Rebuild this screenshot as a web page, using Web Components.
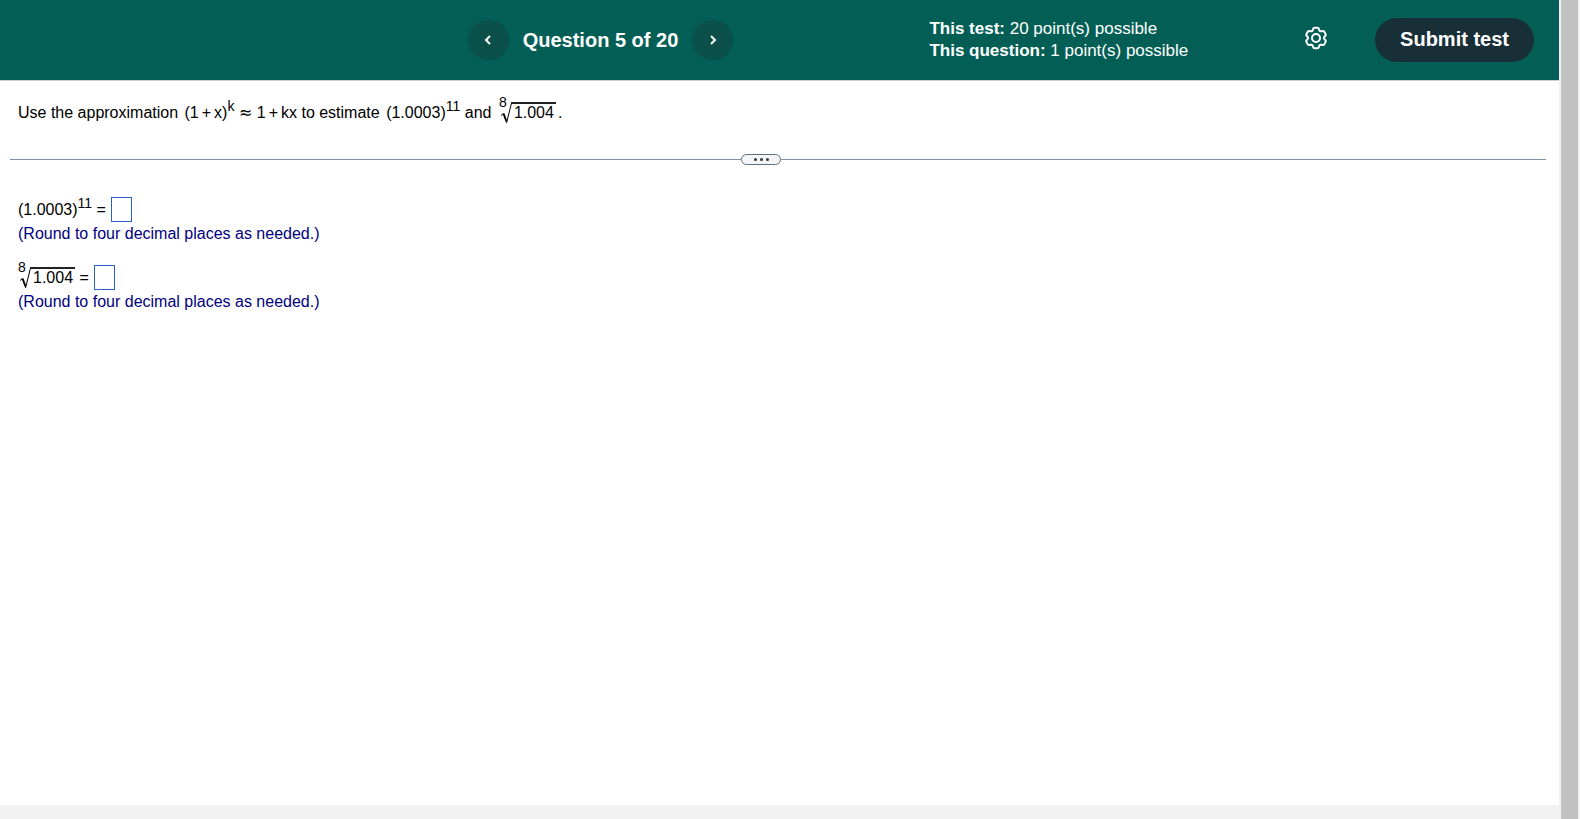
<!DOCTYPE html>
<html lang="en">
<head>
<meta charset="utf-8">
<title>Question 5 of 20</title>
<style>
  body { margin: 0; font: 16px/24px "Liberation Sans", Arial, sans-serif; color: #000; background: #fff; }
</style>
</head>
<body>
<test-page>
  <test-header slot="header">
    <question-nav slot="nav">Question 5 of 20</question-nav>
    <points-info slot="info"></points-info>
    <settings-button slot="actions"></settings-button>
    <submit-button slot="actions">Submit test</submit-button>
  </test-header>
  <question-prompt></question-prompt>
  <split-divider></split-divider>
  <answer-row label="(1.0003) to the 11th power" hint="(Round to four decimal places as needed.)"><math-power exp="11">(1.0003)</math-power></answer-row>
  <answer-row label="8th root of 1.004" hint="(Round to four decimal places as needed.)"><math-root index="8">1.004</math-root></answer-row>
</test-page>

<script>
const define = (name, html, setup) => {
  const template = document.createElement('template');
  template.innerHTML = html;
  customElements.define(name, class extends HTMLElement {
    constructor() {
      super();
      this.attachShadow({ mode: 'open' }).append(template.content.cloneNode(true));
    }
    connectedCallback() { if (setup) setup(this, this.shadowRoot); }
  });
};

define('test-page', `
<style>
  :host { display: flex; min-height: 100vh; }
  .page { flex: 1; min-width: 0; display: flex; flex-direction: column; }
  main { flex: 1; padding-top: 20px; }
  footer { height: 14px; background: #f2f2f2; }
  .track { width: 17px; padding: 0 2px; background: #f1f1f1; display: flex; }
  .thumb { flex: 1; background: #c1c1c1; }
</style>
<div class="page"><slot name="header"></slot><main><slot></slot></main><footer></footer></div>
<div class="track" aria-hidden="true"><div class="thumb"></div></div>`);

define('test-header', `
<style>
  :host { display: block; }
  header { display: grid; grid-template-columns: 30% 1fr calc(40% + 6px); align-items: center; height: 80px; background: #035f56; border-bottom: 1px solid #c8cdd6; color: #fff; }
  .nav { grid-column: 2; }
  .right { display: flex; align-items: center; justify-content: space-between; padding-right: 25px; }
  .actions { display: flex; align-items: center; gap: 48px; }
</style>
<header>
  <div class="nav"><slot name="nav"></slot></div>
  <div class="right"><slot name="info"></slot><div class="actions"><slot name="actions"></slot></div></div>
</header>`);

define('question-nav', `
<style>
  :host { display: flex; align-items: center; gap: 14px; font: bold 20px/24px "Liberation Sans", Arial, sans-serif; white-space: nowrap; }
  button { width: 41px; height: 40px; padding: 0; border: 0; border-radius: 50%; background: #0b4f4b; display: grid; place-items: center; }
  svg { width: 10px; height: 12px; fill: none; stroke: #fff; stroke-width: 2; }
</style>
<button aria-label="Previous question"><svg viewBox="0 0 10 12"><path d="M7 2 3 6l4 4"/></svg></button>
<slot></slot>
<button aria-label="Next question"><svg viewBox="0 0 10 12"><path d="m3 2 4 4-4 4"/></svg></button>`);

define('points-info', `
<style>
  :host { display: block; font-size: 17px; line-height: 22px; white-space: nowrap; }
</style>
<div><b>This test:</b> 20 point(s) possible</div>
<div><b>This question:</b> 1 point(s) possible</div>`);

define('settings-button', `
<style>
  :host { display: block; }
  button { display: block; padding: 0; border: 0; background: none; }
  svg { display: block; width: 22px; height: 26px; overflow: visible; fill: none; stroke: #fff; stroke-width: 2; }
</style>
<button aria-label="Settings"><svg viewBox="-11 -11 22 26"><path class="rim"/><circle r="4"/></svg></button>`,
(host, root) => {
  // Six broad rounded teeth with narrow notches, one tooth pointing straight up.
  const points = [];
  for (let deg = 0; deg < 360; deg += 3) {
    const a = deg * Math.PI / 180;
    const r = 9 + 1.3 * Math.tanh(2 * Math.cos(6 * a) + 1);
    points.push((r * Math.sin(a)).toFixed(2) + ' ' + (-r * Math.cos(a)).toFixed(2));
  }
  root.querySelector('.rim').setAttribute('d', 'M' + points.join('L') + 'Z');
});

define('submit-button', `
<style>
  :host { display: block; }
  button { display: block; height: 44px; padding: 0 25px 2px; border: 0; border-radius: 22px; background: #192f38; color: #fff; font: bold 20px/24px "Liberation Sans", Arial, sans-serif; white-space: nowrap; }
</style>
<button><slot></slot></button>`);

define('math-power', `
<style>
  :host { display: inline; white-space: nowrap; }
  sup { font-size: 14px; line-height: 0; vertical-align: 7px; }
</style><slot></slot><sup></sup>`,
(host, root) => { root.querySelector('sup').textContent = host.getAttribute('exp'); });

define('math-root', `
<style>
  :host { display: inline-block; position: relative; padding: 0 2px 0 15px; white-space: nowrap; line-height: 24px; }
  .index { position: absolute; left: 0; top: -7px; font-size: 14px; line-height: 16px; }
  .bar { position: absolute; left: 12px; right: 0; top: 1px; border-top: 2px solid #222; }
  svg { position: absolute; left: 2px; top: 1px; width: 12px; height: 22px; fill: none; stroke: #000; }
</style><span class="index"></span><svg viewBox="0 0 12 22"><path d="M0 13.500 2.500 11.500"/><path d="m2.500 11.500 3 8" stroke-width="2"/><path d="M5.500 21 10.500 1"/></svg><span class="bar"></span><slot></slot>`,
(host, root) => { root.querySelector('.index').textContent = host.getAttribute('index'); });

define('question-prompt', `
<style>
  :host { display: block; padding: 0 18px; line-height: 24px; }
  p { margin: 0; }
  math-power { margin-left: 2px; }
  math-root { margin: 0 2px 0 3px; }
  .plus { margin: 0 3px; }
  .approx { font: 16px/16px "DejaVu Sans", sans-serif; }
</style>
<p>Use the approximation <math-power exp="k">(1<span class="plus">+</span>x)</math-power> <span class="approx">≈</span> 1<span class="plus">+</span>kx to estimate <math-power exp="11">(1.0003)</math-power> and <math-root index="8">1.004</math-root>.</p>`);

define('split-divider', `
<style>
  :host { display: flex; align-items: center; margin: 29px 13px 32px 10px; }
  .line { flex: 45; height: 1px; background: #8290a3; }
  .line:first-of-type { flex: 43; }
  button { display: flex; align-items: center; justify-content: center; gap: 3px; width: 40px; height: 11px; padding: 0; border: 1px solid #5d7085; border-radius: 6px; background: #f4f5f7; }
  i { width: 3px; height: 3px; border-radius: 50%; background: #333; }
</style>
<span class="line"></span><button aria-label="Resize panels"><i></i><i></i><i></i></button><span class="line"></span>`);

define('answer-row', `
<style>
  :host { display: block; margin: 0 18px 19px; }
  label { display: flex; align-items: center; height: 25px; white-space: pre; }
  input { box-sizing: border-box; width: 21px; height: 25px; margin: 0 0 0 5px; padding: 0 2px; border: 1px solid #2a62cc; border-radius: 0; font: inherit; background: #fff; }
  p { margin: 0; line-height: 24px; color: #000080; }
</style>
<label><span><slot></slot> =</span><input type="text"></label><p></p>`,
(host, root) => {
  root.querySelector('input').setAttribute('aria-label', host.getAttribute('label'));
  root.querySelector('p').textContent = host.getAttribute('hint');
});
</script>
</body>
</html>
